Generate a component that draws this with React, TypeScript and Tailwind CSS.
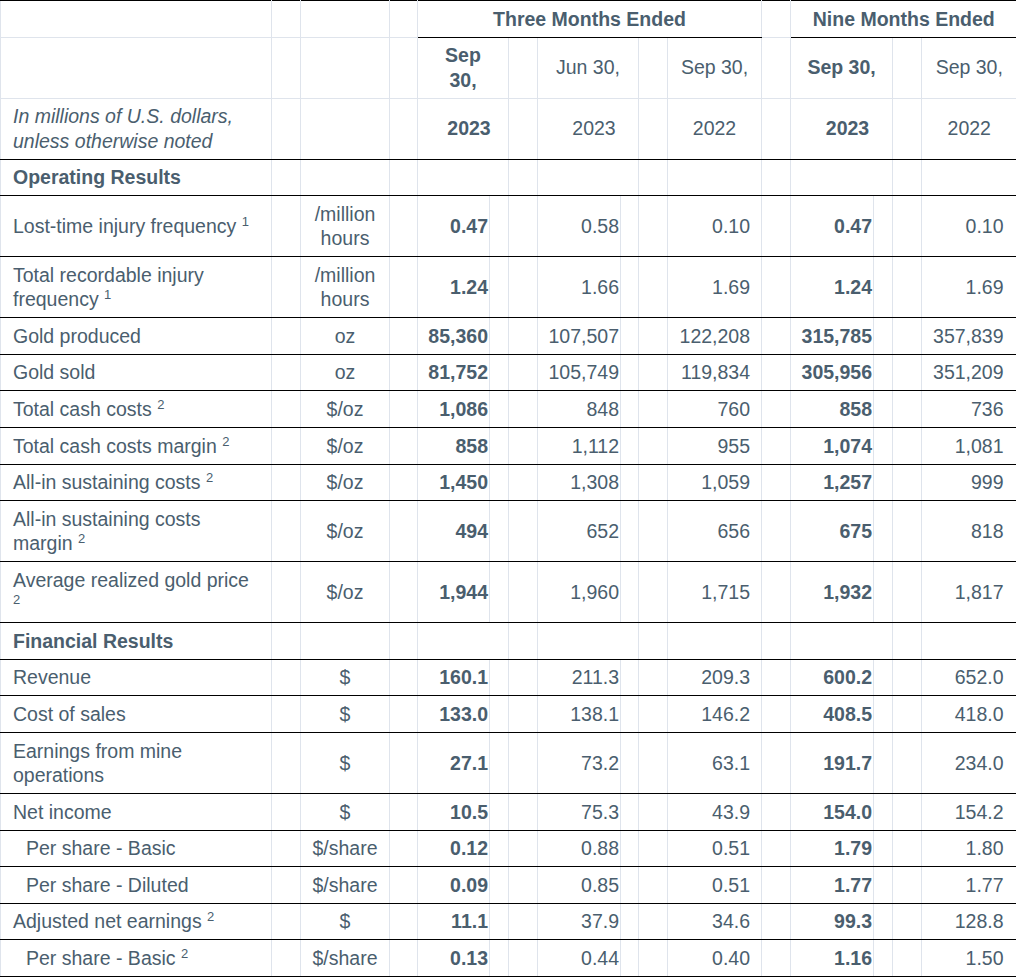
import clsx from "clsx";

type Line = {
  label: string;
  note?: string;
  indent?: boolean;
  unit: string;
  values: [string, string, string, string, string];
};

const operating: Line[] = [
  { label: "Lost-time injury frequency", note: "1", unit: "/million hours", values: ["0.47", "0.58", "0.10", "0.47", "0.10"] },
  { label: "Total recordable injury frequency", note: "1", unit: "/million hours", values: ["1.24", "1.66", "1.69", "1.24", "1.69"] },
  { label: "Gold produced", unit: "oz", values: ["85,360", "107,507", "122,208", "315,785", "357,839"] },
  { label: "Gold sold", unit: "oz", values: ["81,752", "105,749", "119,834", "305,956", "351,209"] },
  { label: "Total cash costs", note: "2", unit: "$/oz", values: ["1,086", "848", "760", "858", "736"] },
  { label: "Total cash costs margin", note: "2", unit: "$/oz", values: ["858", "1,112", "955", "1,074", "1,081"] },
  { label: "All-in sustaining costs", note: "2", unit: "$/oz", values: ["1,450", "1,308", "1,059", "1,257", "999"] },
  { label: "All-in sustaining costs margin", note: "2", unit: "$/oz", values: ["494", "652", "656", "675", "818"] },
  { label: "Average realized gold price", note: "2", unit: "$/oz", values: ["1,944", "1,960", "1,715", "1,932", "1,817"] },
];

const financial: Line[] = [
  { label: "Revenue", unit: "$", values: ["160.1", "211.3", "209.3", "600.2", "652.0"] },
  { label: "Cost of sales", unit: "$", values: ["133.0", "138.1", "146.2", "408.5", "418.0"] },
  { label: "Earnings from mine operations", unit: "$", values: ["27.1", "73.2", "63.1", "191.7", "234.0"] },
  { label: "Net income", unit: "$", values: ["10.5", "75.3", "43.9", "154.0", "154.2"] },
  { label: "Per share - Basic", indent: true, unit: "$/share", values: ["0.12", "0.88", "0.51", "1.79", "1.80"] },
  { label: "Per share - Diluted", indent: true, unit: "$/share", values: ["0.09", "0.85", "0.51", "1.77", "1.77"] },
  { label: "Adjusted net earnings", note: "2", unit: "$", values: ["11.1", "37.9", "34.6", "99.3", "128.8"] },
  { label: "Per share - Basic", note: "2", indent: true, unit: "$/share", values: ["0.13", "0.44", "0.40", "1.16", "1.50"] },
];

const cell = "border-r border-b border-r-[#dfe4ec] py-[5.6px] align-middle";

function Blank({ dark, span }: { dark?: boolean; span?: number }) {
  return <td colSpan={span} className={clsx(cell, dark ? "border-b-black" : "border-b-[#dfe4ec]")} />;
}

function Label({ line }: { line: Line }) {
  return (
    <td
      className={clsx(
        cell,
        "border-l border-l-[#dfe4ec] border-b-black pr-[13px] text-left",
        line.indent ? "pl-[25px]" : "pl-[12px]"
      )}
    >
      {line.label}
      {line.note && (
        <>
          {" "}
          <sup className="-top-[7px] text-[13px]">{line.note}</sup>
        </>
      )}
    </td>
  );
}

function DataRow({ line }: { line: Line }) {
  const [a, b, c, d, e] = line.values;
  return (
    <tr>
      <Label line={line} />
      <Blank dark />
      <td className={clsx(cell, "border-b-black px-[6px] text-center")}>{line.unit}</td>
      <Blank dark />
      <td className={clsx(cell, "border-b-black pr-[1px] text-right font-bold")}>{a}</td>
      <Blank dark />
      <Blank dark />
      <td className={clsx(cell, "border-b-black pr-[1px] text-right")}>{b}</td>
      <Blank dark />
      <Blank dark />
      <td className={clsx(cell, "border-b-black pr-[11px] text-right")}>{c}</td>
      <Blank dark />
      <td className={clsx(cell, "border-b-black pr-[1px] text-right font-bold")}>{d}</td>
      <Blank dark />
      <Blank dark />
      <td className={clsx(cell, "border-b-black border-r-0 pr-[13px] text-right")}>{e}</td>
    </tr>
  );
}

function SectionRow({ title }: { title: string }) {
  return (
    <tr>
      <td className={clsx(cell, "border-l border-l-[#dfe4ec] border-b-black pl-[12px] text-left font-bold")}>{title}</td>
      <Blank dark />
      <Blank dark />
      <Blank dark />
      <Blank dark span={2} />
      <Blank dark />
      <Blank dark span={2} />
      <Blank dark />
      <Blank dark />
      <Blank dark />
      <Blank dark span={2} />
      <Blank dark />
      <td className={clsx(cell, "border-b-black border-r-0")}>&nbsp;</td>
    </tr>
  );
}

export default function App() {
  const widths = [
    "w-[271px]", "w-[29px]", "w-[89px]", "w-[28px]", "w-[72px]", "w-[19px]", "w-[29px]", "w-[83px]",
    "w-[18px]", "w-[29px]", "w-[94px]", "w-[29px]", "w-[83px]", "w-[19px]", "w-[29px]", "w-[95px]",
  ];

  return (
    <div className="min-h-screen bg-white">
      <table className="w-[1016px] table-fixed border-collapse font-[family-name:Liberation_Sans,Arial,sans-serif] text-[19.5px] leading-[24.4px] text-[#4a5e6e]">
        <colgroup>
          {widths.map((w, i) => (
            <col key={i} className={w} />
          ))}
        </colgroup>
        <tbody>
          <tr className="[&>td]:border-t [&>td]:border-t-black">
            <td className={clsx(cell, "border-l border-l-[#dfe4ec] border-b-[#dfe4ec]")}>&nbsp;</td>
            <Blank />
            <Blank />
            <Blank />
            <td colSpan={7} className={clsx(cell, "border-b-black text-center font-bold")}>
              Three Months Ended
            </td>
            <Blank />
            <td colSpan={4} className={clsx(cell, "border-b-black border-r-0 text-center font-bold")}>
              Nine Months Ended
            </td>
          </tr>
          <tr>
            <td className={clsx(cell, "border-l border-l-[#dfe4ec] border-b-[#dfe4ec]")}>&nbsp;</td>
            <Blank />
            <Blank />
            <Blank />
            <td colSpan={2} className={clsx(cell, "border-b-[#dfe4ec] px-[13px] text-center font-bold")}>
              Sep 30,
            </td>
            <Blank />
            <td colSpan={2} className={clsx(cell, "border-b-[#dfe4ec] px-[6px] text-center")}>
              Jun 30,
            </td>
            <Blank />
            <td className={clsx(cell, "border-b-[#dfe4ec] px-[4px] text-center")}>Sep 30,</td>
            <Blank />
            <td colSpan={2} className={clsx(cell, "border-b-[#dfe4ec] px-[6px] text-center font-bold")}>
              Sep 30,
            </td>
            <Blank />
            <td className={clsx(cell, "border-b-[#dfe4ec] border-r-0 px-[4px] text-center")}>Sep 30,</td>
          </tr>
          <tr>
            <td className={clsx(cell, "border-l border-l-[#dfe4ec] border-b-black pl-[12px] pr-[13px] text-left italic")}>
              In millions of U.S. dollars, unless otherwise noted
            </td>
            <Blank dark />
            <Blank dark />
            <Blank dark />
            <td colSpan={2} className={clsx(cell, "border-b-black pl-[19px] pr-[7px] text-center font-bold")}>
              2023
            </td>
            <Blank dark />
            <td colSpan={2} className={clsx(cell, "border-b-black pl-[19px] pr-[7px] text-center")}>
              2023
            </td>
            <Blank dark />
            <td className={clsx(cell, "border-b-black text-center")}>2022</td>
            <Blank dark />
            <td colSpan={2} className={clsx(cell, "border-b-black pl-[19px] pr-[7px] text-center font-bold")}>
              2023
            </td>
            <Blank dark />
            <td className={clsx(cell, "border-b-black border-r-0 text-center")}>2022</td>
          </tr>
          <SectionRow title="Operating Results" />
          {operating.map((line, i) => (
            <DataRow key={i} line={line} />
          ))}
          <SectionRow title="Financial Results" />
          {financial.map((line, i) => (
            <DataRow key={i} line={line} />
          ))}
        </tbody>
      </table>
    </div>
  );
}
